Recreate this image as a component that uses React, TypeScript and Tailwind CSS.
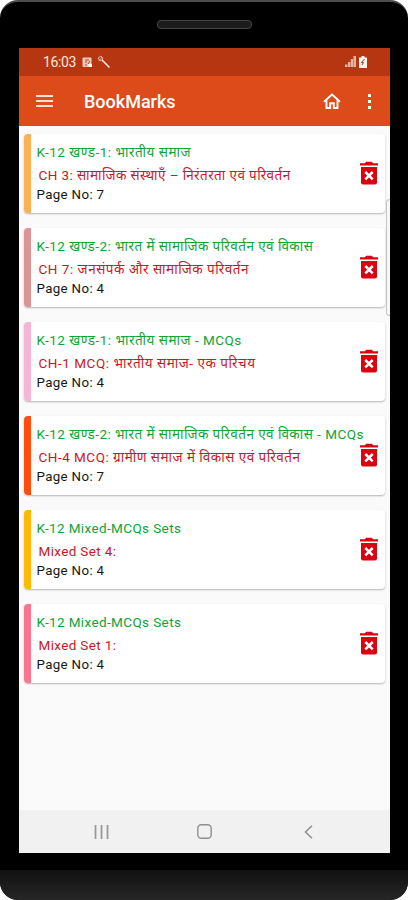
interface Bookmark {
  id: number
  book: string
  chapter: string
  page: number
  strip: string
  bookTracking: string
  chapterTracking: string
}

const BOOKMARKS: Bookmark[] = [
  {
    id: 1,
    book: 'K-12 खण्ड-1: भारतीय समाज',
    chapter: 'CH 3: सामाजिक संस्थाएँ – निरंतरता एवं परिवर्तन',
    page: 7,
    strip: 'bg-[#fbb254]',
    bookTracking: 'tracking-[0.5px]',
    chapterTracking: 'tracking-[0.42px]'
  },
  {
    id: 2,
    book: 'K-12 खण्ड-2: भारत में सामाजिक परिवर्तन एवं विकास',
    chapter: 'CH 7: जनसंपर्क और सामाजिक परिवर्तन',
    page: 4,
    strip: 'bg-[#dc9496]',
    bookTracking: 'tracking-[0.47px]',
    chapterTracking: 'tracking-[0.52px]'
  },
  {
    id: 3,
    book: 'K-12 खण्ड-1: भारतीय समाज - MCQs',
    chapter: 'CH-1 MCQ: भारतीय समाज- एक परिचय',
    page: 4,
    strip: 'bg-[#f5b5d5]',
    bookTracking: 'tracking-[0.5px]',
    chapterTracking: 'tracking-[0.54px]'
  },
  {
    id: 4,
    book: 'K-12 खण्ड-2: भारत में सामाजिक परिवर्तन एवं विकास - MCQs',
    chapter: 'CH-4 MCQ: ग्रामीण समाज में विकास एवं परिवर्तन',
    page: 7,
    strip: 'bg-[#ff4d0d]',
    bookTracking: 'tracking-[0.47px]',
    chapterTracking: 'tracking-[0.5px]'
  },
  {
    id: 5,
    book: 'K-12 Mixed-MCQs Sets',
    chapter: 'Mixed Set 4:',
    page: 4,
    strip: 'bg-[#ffb80a]',
    bookTracking: 'tracking-[0.38px]',
    chapterTracking: 'tracking-[0.35px]'
  },
  {
    id: 6,
    book: 'K-12 Mixed-MCQs Sets',
    chapter: 'Mixed Set 1:',
    page: 4,
    strip: 'bg-[#f9748f]',
    bookTracking: 'tracking-[0.38px]',
    chapterTracking: 'tracking-[0.35px]'
  }
]

function TrashIcon() {
  return (
    <svg width="18" height="24" viewBox="0 0 18 24" fill="none">
      <path d="M0 2.200h5L6 .8h6l1 1.400h5v2.300H0z" fill="#d9040f" />
      <path d="M1 6h16v15.500a2 2 0 0 1-2 2H3a2 2 0 0 1-2-2z" fill="#d9040f" />
      <path d="m5.300 11 7.400 7.400m0-7.400-7.400 7.400" stroke="#fff" strokeWidth="2.500" />
    </svg>
  )
}

function StatusBar() {
  return (
    <div className="flex h-7 shrink-0 items-center bg-[#b53611] pl-6 pr-[23px] text-[#fbe6df]">
      <span className="w-[39px] text-[14px] leading-none tracking-[-0.4px]">16:03</span>
      <svg width="11" height="11" viewBox="0 0 11 11" fill="none">
        <rect x=".5" y=".5" width="9" height="9.500" rx="1" fill="#f3c9bb" />
        <path d="M3 3h4M3 5h2M6 7l2-3M3 8h2" stroke="#a84428" />
        <path d="M6 7h4v3H7z" fill="#fff" />
      </svg>
      <svg className="ml-1" width="14" height="14" viewBox="0 0 14 14" fill="none">
        <path d="M2 5.500 5.500 2M1 3l3-2 2 3-3 2z" stroke="#e9b4a2" />
        <path d="m5 5 7.500 7.500" stroke="#fbe6df" strokeWidth="1.600" />
      </svg>
      <svg className="ml-auto" width="11" height="12" viewBox="0 0 11 12" fill="#e9b3a3">
        <path d="M0 8.500h2.500V11H0zM3 6h2.300v5H3zM5.800 3h2.300v8H5.800zM8.500 0H11v11H8.500z" />
      </svg>
      <svg className="ml-[3px]" width="8" height="12" viewBox="0 0 8 12">
        <path d="M2.500 0h3v1.500H8V12H0V1.500h2.500z" fill="#fff3ee" />
        <path d="m5.500 3-3 3.500h2L3 9" stroke="#97401f" fill="none" />
      </svg>
    </div>
  )
}

function AppBar() {
  return (
    <header className="flex h-[50px] shrink-0 items-center bg-[#de4b1b] pl-[17px] pr-[18px] text-white">
      <button type="button" aria-label="Menu" className="flex w-[48px] flex-col gap-[2.5px]">
        <span className="h-[2.5px] w-[17px] bg-[#ffe0d6]" />
        <span className="h-[2.5px] w-[17px] bg-[#ffe0d6]" />
        <span className="h-[2.5px] w-[17px] bg-[#ffe0d6]" />
      </button>
      <h1 className="pt-[2px] text-[18px] font-medium leading-none">BookMarks</h1>
      <button type="button" aria-label="Home" className="ml-auto">
        <svg width="18" height="17" viewBox="0 0 18 17" fill="none" stroke="#fff" strokeWidth="1.900">
          <path d="M1 8.800 9 1.600l8 7.200M3.500 7.500V15h3.700v-4.700h3.600V15h3.700V7.500" />
        </svg>
      </button>
      <button type="button" aria-label="More" className="ml-[27px] mr-px flex w-[3px] flex-col gap-[3px]">
        <span className="size-[3px] bg-white" />
        <span className="size-[3px] bg-white" />
        <span className="size-[3px] bg-white" />
      </button>
    </header>
  )
}

function BookmarkCard({ item }: { item: Bookmark }) {
  return (
    <li className="flex h-[79px] overflow-hidden rounded-[4px] bg-white shadow-[0_1px_2px_rgba(0,0,0,0.28)]">
      <div className={`w-[7px] shrink-0 ${item.strip}`} />
      <div className="w-[322px] shrink-0 whitespace-nowrap pl-[5.5px] pt-[7px] text-[13.5px]">
        <p className={`h-[23px] leading-[23px] text-[#10a336] ${item.bookTracking}`}>{item.book}</p>
        <p className={`h-[22px] pl-[2px] leading-[22px] text-[#cd161f] ${item.chapterTracking}`}>
          {item.chapter}
        </p>
        <p className="h-[18px] text-[13.3px] leading-[18px] tracking-[0.35px] text-[#161616]">
          Page No: {item.page}
        </p>
      </div>
      <button type="button" aria-label="Delete" className="ml-[7px] mt-[27px] h-6 w-[18px]">
        <TrashIcon />
      </button>
    </li>
  )
}

function NavBar() {
  return (
    <nav className="flex h-[43px] shrink-0 items-center bg-[#f1f1f1] pl-[75px]">
      <svg width="15" height="14" viewBox="0 0 15 14" stroke="#999" strokeWidth="1.800">
        <path d="M1.500 0v14M7.500 0v14M13.500 0v14" />
      </svg>
      <svg className="ml-[88px]" width="15" height="15" viewBox="0 0 15 15" fill="none">
        <rect x=".8" y=".8" width="13.400" height="13.400" rx="3.500" stroke="#8e8e8e" strokeWidth="1.400" />
      </svg>
      <svg className="ml-[92px]" width="9" height="14" viewBox="0 0 9 14" fill="none">
        <path d="M8 .8 1.500 7 8 13.200" stroke="#8e8e8e" strokeWidth="1.500" />
      </svg>
    </nav>
  )
}

export default function App() {
  return (
    <div className="h-[900px] w-[408px] overflow-hidden bg-white font-['Roboto','Noto_Sans',sans-serif]">
      <div className="relative flex h-[900px] flex-col overflow-hidden rounded-[18px] border-t-2 border-[#4b4b4b] bg-black">
        <div className="flex h-[46px] shrink-0 justify-center pt-[18px]">
          <div className="h-[9px] w-[95px] rounded-[4px] border border-[#444] bg-[#1c1c1c]" />
        </div>
        <div className="relative ml-[19px] flex h-[805px] w-[371px] shrink-0 flex-col bg-[#fafafa]">
          <StatusBar />
          <AppBar />
          <ul className="flex flex-1 flex-col gap-[15px] pl-[5px] pr-[5px] pt-2">
            {BOOKMARKS.map((item) => (
              <BookmarkCard key={item.id} item={item} />
            ))}
          </ul>
          <NavBar />
          <div className="absolute right-0 top-[151px] h-[117px] w-[4px] rounded-l border border-r-0 border-[#c4c4c4] bg-[#f7f7f7]" />
        </div>
        <div className="mt-[17px] h-[30px] shrink-0 rounded-b-[18px] bg-gradient-to-b from-[#111] to-[#262626]" />
      </div>
    </div>
  )
}
